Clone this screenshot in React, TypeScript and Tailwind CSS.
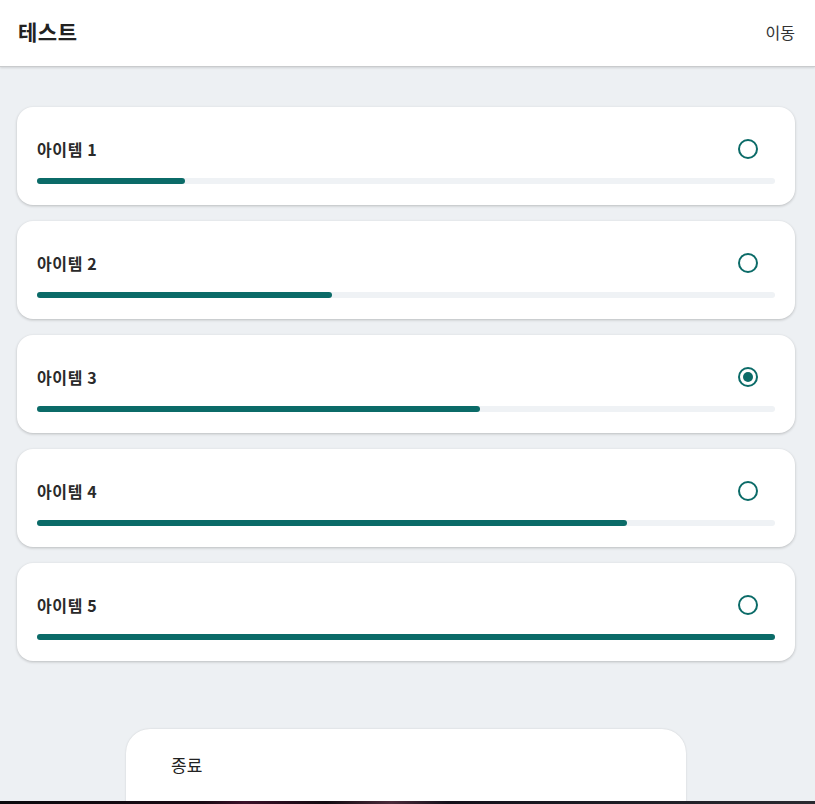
import React from "react";

const items = [
  { label: "아이템 1", pct: 20, selected: false },
  { label: "아이템 2", pct: 40, selected: false },
  { label: "아이템 3", pct: 60, selected: true },
  { label: "아이템 4", pct: 80, selected: false },
  { label: "아이템 5", pct: 100, selected: false },
];

export default function App() {
  return (
    <div
      className="relative h-[804px] w-full overflow-hidden bg-[#edf0f3] text-[#222]"
      style={{ fontFamily: '"Noto Sans CJK KR", "Noto Sans", sans-serif' }}
    >
      <header className="flex h-[67px] items-center justify-between border-b border-[#c9cbcd] bg-white pb-[3px] pl-[18px] pr-[20px] shadow-[0_1px_2px_rgba(0,0,0,0.12)]">
        <h1 className="text-[21px] font-bold leading-none tracking-[0.5px] text-[#222]">테스트</h1>
        <span className="text-[16px] leading-none text-[#333]">이동</span>
      </header>

      <main className="flex flex-col gap-4 pl-[17px] pr-[20px] pt-[40px]">
        {items.map((it) => (
          <div
            key={it.label}
            className="rounded-[16px] bg-white px-5 pt-[31px] pb-[21px] shadow-[0_1px_3px_rgba(0,0,0,0.22)]"
          >
            <div className="flex h-[22px] items-center justify-between">
              <span className="text-[16px] font-bold leading-[22px] tracking-[0.6px] text-[#2a2a2a]">{it.label}</span>
              <span className="mr-[17px] flex h-5 w-5 items-center justify-center rounded-full border-2 border-[#0b6b68]">
                {it.selected && <span className="h-[10px] w-[10px] rounded-full bg-[#0b6b68]" />}
              </span>
            </div>
            <div className="mt-[18px] h-1.5 w-full rounded-full bg-[#eff2f5]">
              <div className="h-full rounded-full bg-[#0b6b68]" style={{ width: `${it.pct}%` }} />
            </div>
          </div>
        ))}
      </main>

      <div className="ml-[126px] mt-[68px] h-[120px] w-[560px] rounded-t-[24px] bg-white pl-[45px] pt-[24px] shadow-[0_0_2px_rgba(0,0,0,0.15)]">
        <span className="text-[17px] leading-[22px] text-[#222]">종료</span>
      </div>

      <div className="absolute bottom-0 left-0 h-[3px] w-full bg-[linear-gradient(90deg,#0a0a0d_0%,#1a0a14_25%,#3a0f28_30%,#120a10_40%,#4a2a3a_48%,#14101a_55%,#1a1a22_70%,#2a2a30_100%)]" />
    </div>
  );
}
